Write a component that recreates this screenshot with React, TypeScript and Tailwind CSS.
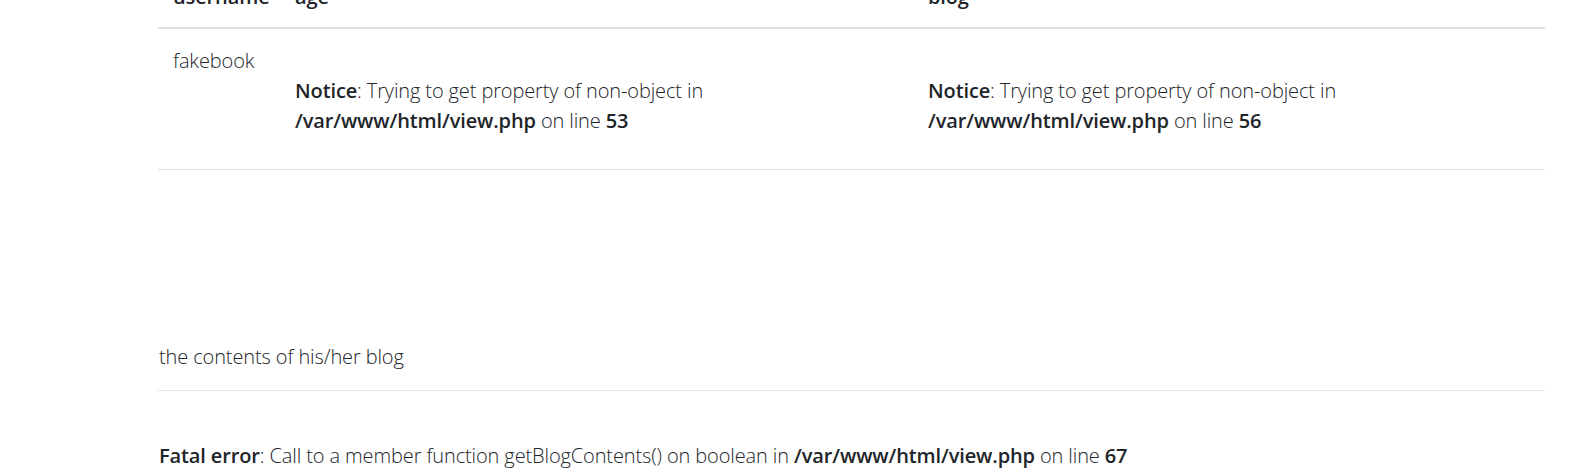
import React from "react";

export default function App() {
  return (
    <div className="min-h-screen bg-white font-['Open_Sans',sans-serif] text-[20px] font-light leading-[30px] tracking-[-0.12px] text-[#212529]">
      <div className="ml-[158px] w-[1387px]">
        <div className="grid h-[29px] grid-cols-[122px_633px_1fr] items-start border-b-2 border-[#dee2e6] font-semibold">
          <div className="-mt-[18px] px-[15px]">username</div>
          <div className="-mt-[18px] px-[15px]">age</div>
          <div className="-mt-[18px] px-[15px]">blog</div>
        </div>
        <div className="grid h-[141px] grid-cols-[122px_633px_1fr] items-start border-b border-[#dee2e6]">
          <div className="px-[15px] pt-[17px]">fakebook</div>
          <div className="px-[15px] pt-[17px]">
            <br />
            <b className="font-semibold">Notice</b>: Trying to get property of non-object in{" "}
            <b className="font-semibold">/var/www/html/view.php</b> on line <b className="font-semibold">53</b>
          </div>
          <div className="px-[15px] pt-[17px]">
            <br />
            <b className="font-semibold">Notice</b>: Trying to get property of non-object in{" "}
            <b className="font-semibold">/var/www/html/view.php</b> on line <b className="font-semibold">56</b>
          </div>
        </div>
        <p className="mt-[172px] pl-px">the contents of his/her blog</p>
        <hr className="mt-[18px] border-0 border-t border-[#e6e6e6]" />
        <p className="mt-[50px] pl-px">
          <b className="font-semibold">Fatal error</b>: Call to a member function getBlogContents() on boolean in{" "}
          <b className="font-semibold">/var/www/html/view.php</b> on line <b className="font-semibold">67</b>
        </p>
      </div>
    </div>
  );
}
